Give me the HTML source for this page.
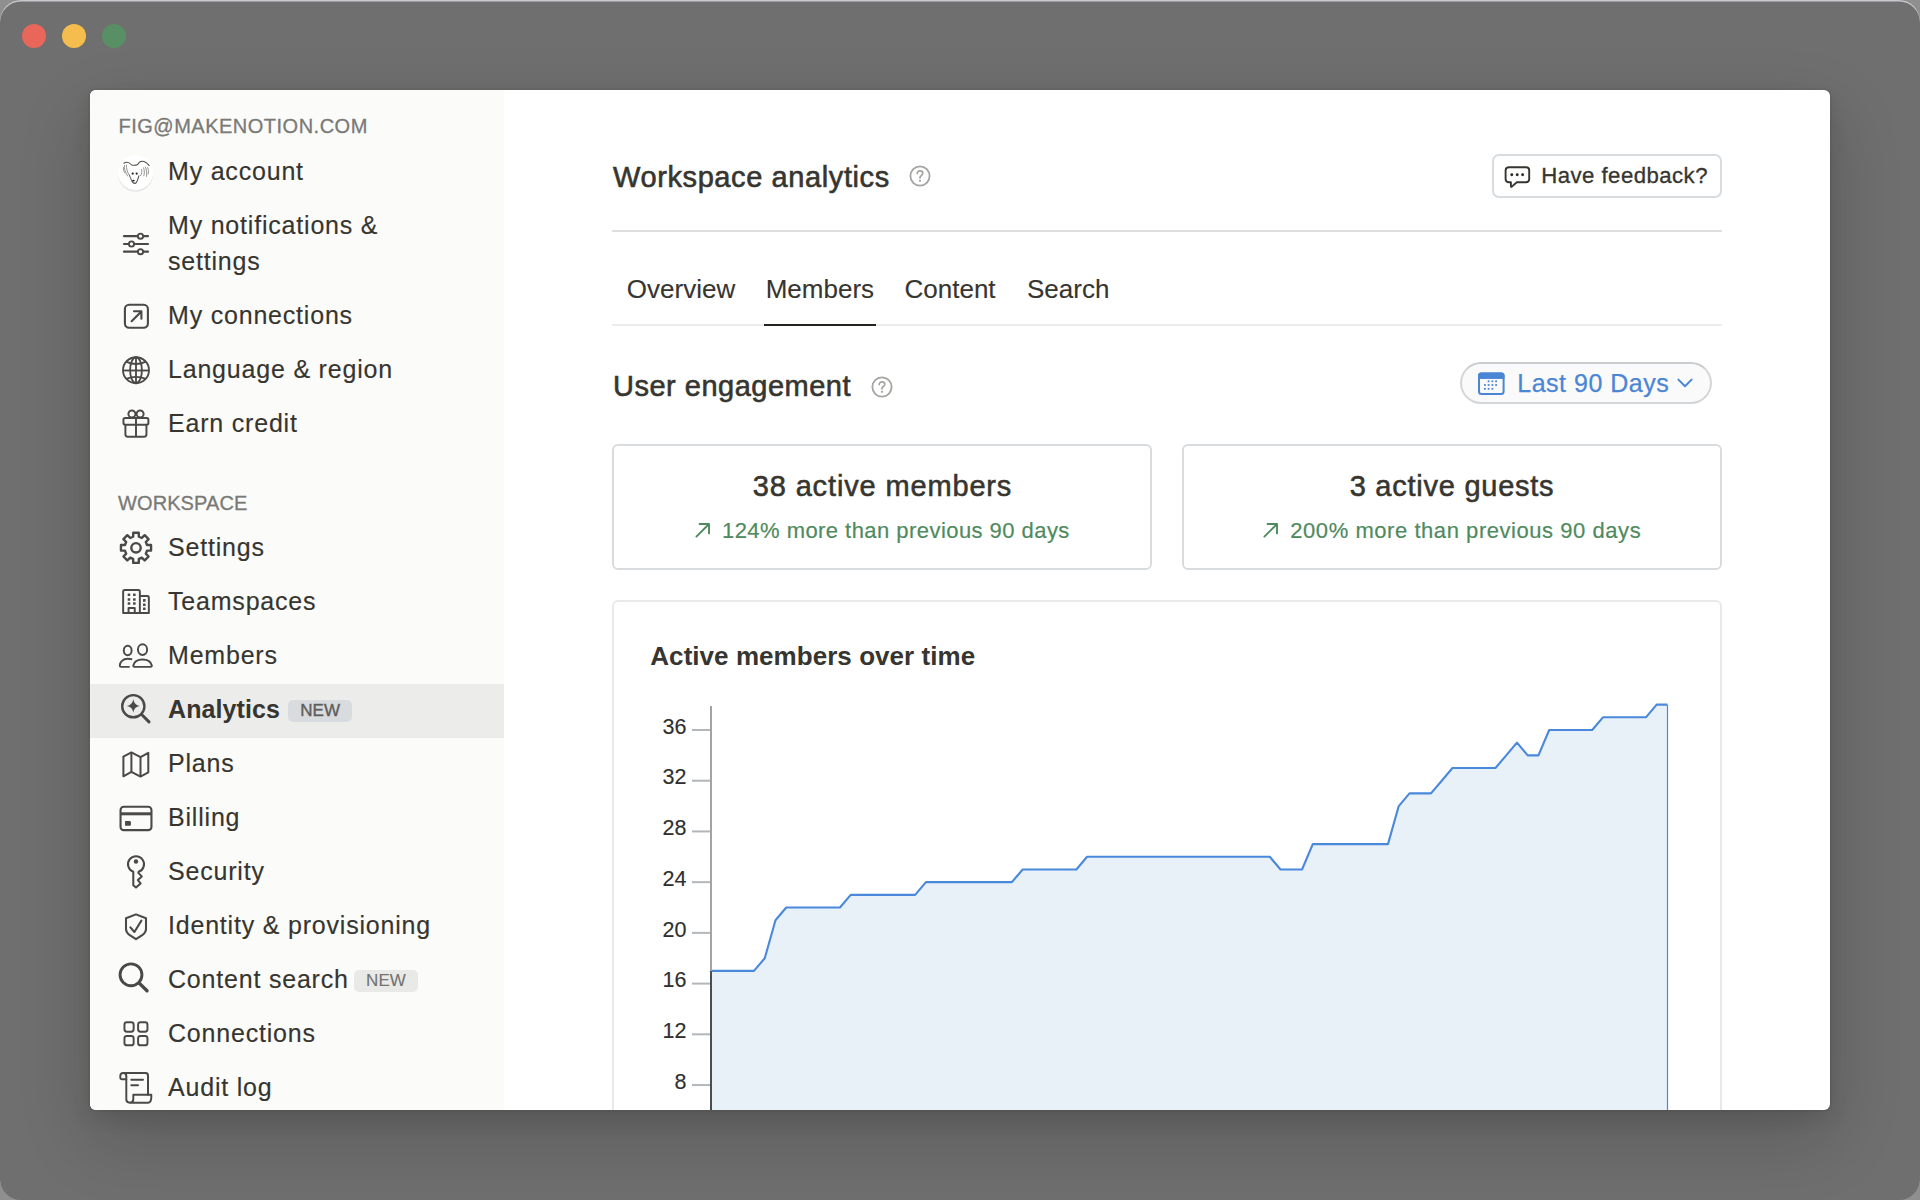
<!DOCTYPE html>
<html><head><meta charset="utf-8"><title>Workspace analytics</title>
<style>
html,body{margin:0;padding:0;width:1920px;height:1200px;overflow:hidden;background:#8f8f8f;font-family:"Liberation Sans", sans-serif;}
.win{position:absolute;left:0;top:0;width:1920px;height:1200px;background:#6f6f6f;border-radius:21px;overflow:hidden;box-shadow:inset 0 1.5px 0 #c7c9cc;}
.dot{position:absolute;top:24px;width:24px;height:24px;border-radius:50%;}
.panel{position:absolute;left:90px;top:90px;width:1740px;height:1020px;background:#fff;border-radius:6px;overflow:hidden;
box-shadow:0 0 0 1.8px rgba(15,15,15,0.05),0 9px 18px rgba(15,15,15,0.1),0 27px 71px rgba(15,15,15,0.2);}
.side{position:absolute;left:0;top:0;width:414px;height:1020px;background:#fbfbfa;}
.hl{position:absolute;left:0;top:594px;width:414px;height:54px;background:#ececeb;}
.layer{position:absolute;left:-90px;top:-90px;width:1920px;height:1200px;}
.t{position:absolute;white-space:nowrap;}
.ic{position:absolute;overflow:visible;}
.box{position:absolute;box-sizing:border-box;}
.badge{position:absolute;border-radius:5px;}
</style></head>
<body>
<div class="win">
<div class="dot" style="left:22px;background:#e8665a"></div>
<div class="dot" style="left:62px;background:#f4bd4e"></div>
<div class="dot" style="left:102px;background:#598f64"></div>
<div class="panel">
<div class="side"></div>
<div class="hl"></div>
<div class="layer">
<svg class="ic" style="left:118px;top:225px" width="36" height="36" viewBox="0 0 36 36"><g stroke="#4a4945" stroke-width="2.2" stroke-linecap="round" fill="none">
<line x1="6" y1="11.2" x2="30" y2="11.2"/><line x1="6" y1="19" x2="30" y2="19"/><line x1="6" y1="26.7" x2="30" y2="26.7"/></g>
<g stroke="#4a4945" stroke-width="1.9" fill="#fbfbfa"><circle cx="22.5" cy="11.2" r="2.6"/><circle cx="13.5" cy="19" r="2.6"/><circle cx="22.5" cy="26.7" r="2.6"/></g></svg>
<svg class="ic" style="left:118px;top:298px" width="36" height="36" viewBox="0 0 36 36"><g stroke="#4a4945" stroke-width="2.1" fill="none" stroke-linecap="round" stroke-linejoin="round">
<rect x="6.9" y="6.8" width="23" height="23" rx="4.2"/><path d="M13.6 23.2 L23.4 13.4 M16 13.3 H23.4 V20.8"/></g></svg>
<svg class="ic" style="left:118px;top:352px" width="36" height="36" viewBox="0 0 36 36"><g stroke="#4a4945" stroke-width="1.85" fill="none">
<circle cx="18" cy="18.2" r="13"/><ellipse cx="18" cy="18.2" rx="5.9" ry="13"/><line x1="18" y1="5.2" x2="18" y2="31.2"/>
<line x1="5" y1="18.5" x2="31" y2="18.5"/><path d="M8.2 9.6 Q18 14.4 27.8 9.6"/><path d="M8.2 26.8 Q18 22.9 27.8 26.8"/></g></svg>
<svg class="ic" style="left:118px;top:405px" width="36" height="36" viewBox="0 0 36 36"><g stroke="#4a4945" stroke-width="1.95" fill="none" stroke-linejoin="round">
<circle cx="13.9" cy="8.9" r="3.5"/><circle cx="22.1" cy="8.9" r="3.5"/>
<rect x="5.45" y="12.95" width="24.95" height="6.8" rx="1.8" fill="#fbfbfa"/><path d="M7.4 19.75 V29.2 A2.5 2.5 0 0 0 9.9 31.7 H25.95 A2.5 2.5 0 0 0 28.45 29.2 V19.75"/>
<line x1="18" y1="12.4" x2="18" y2="31.7"/></g></svg>
<svg class="ic" style="left:118px;top:530px" width="36" height="36" viewBox="0 0 36 36"><g stroke="#4a4945" stroke-width="2.4" fill="none" stroke-linejoin="round">
<path d="M29.04 14.96 L33.05 15.05 L33.05 20.55 L29.04 20.64 L27.81 23.60 L30.59 26.50 L26.70 30.39 L23.80 27.61 L20.84 28.84 L20.75 32.85 L15.25 32.85 L15.16 28.84 L12.20 27.61 L9.30 30.39 L5.41 26.50 L8.19 23.60 L6.96 20.64 L2.95 20.55 L2.95 15.05 L6.96 14.96 L8.19 12.00 L5.41 9.10 L9.30 5.21 L12.20 7.99 L15.16 6.76 L15.25 2.75 L20.75 2.75 L20.84 6.76 L23.80 7.99 L26.70 5.21 L30.59 9.10 L27.81 12.00 Z"/><circle cx="18" cy="17.8" r="4.7"/></g></svg>
<svg class="ic" style="left:118px;top:584px" width="36" height="36" viewBox="0 0 36 36"><g stroke="#4a4945" stroke-width="1.95" fill="none" stroke-linejoin="round">
<path d="M6.6 29.05 H5.15 V7.5 A1.45 1.45 0 0 1 6.6 6.05 H20.4 A1.45 1.45 0 0 1 21.85 7.5 V29.05 Z"/>
<path d="M21.85 12.05 H29.4 A1.45 1.45 0 0 1 30.85 13.5 V29.05 H21.85"/><path d="M10.55 29.05 V24.05 H16.75 V29.05"/></g>
<g fill="#4a4945"><rect x="9.65" y="9.5" width="2.6" height="2.6" rx="0.5"/><rect x="15.05" y="9.5" width="2.6" height="2.6" rx="0.5"/>
<rect x="9.65" y="14.15" width="2.6" height="2.6" rx="0.5"/><rect x="15.05" y="14.15" width="2.6" height="2.6" rx="0.5"/>
<rect x="9.65" y="18.2" width="2.6" height="2.6" rx="0.5"/><rect x="15.05" y="18.2" width="2.6" height="2.6" rx="0.5"/>
<rect x="25" y="15.05" width="2.6" height="2.6" rx="0.5"/><rect x="25" y="19.4" width="2.6" height="2.6" rx="0.5"/><rect x="25" y="23.45" width="2.6" height="2.6" rx="0.5"/></g></svg>
<svg class="ic" style="left:116px;top:637px" width="40" height="36" viewBox="0 0 40 36"><g stroke="#4a4945" stroke-width="1.95" fill="none" stroke-linecap="butt" stroke-linejoin="round">
<ellipse cx="11.7" cy="13.5" rx="3.9" ry="4.7"/><ellipse cx="26.55" cy="12.6" rx="4.6" ry="5.35"/>
<path d="M16.2 22.4 C14.8 21.9 13.4 21.65 11.7 21.65 C6.8 21.65 3.8 25.2 3.8 28.6 C3.8 29.4 4.3 29.85 5 29.85 H13.7"/>
<path d="M18.4 29.85 C17.6 29.85 17.15 29.3 17.3 28.5 C18.2 24.6 22 22.55 26.55 22.55 C31.1 22.55 34.9 24.6 35.8 28.5 C35.95 29.3 35.5 29.85 34.7 29.85 Z"/></g></svg>
<svg class="ic" style="left:118px;top:690px" width="36" height="36" viewBox="0 0 36 36"><g stroke="#4a4945" fill="none" stroke-linecap="round">
<circle cx="15.3" cy="16.2" r="11.1" stroke-width="2.4"/><line x1="23.6" y1="24.5" x2="31" y2="31.9" stroke-width="3"/></g>
<path fill="#4a4945" d="M15.3 9.2 Q16.2 15 21.7 15.9 Q16.2 16.8 15.3 22.6 Q14.4 16.8 8.9 15.9 Q14.4 15 15.3 9.2 Z"/></svg>
<svg class="ic" style="left:118px;top:747px" width="36" height="36" viewBox="0 0 36 36"><g stroke="#4a4945" stroke-width="2" fill="none" stroke-linejoin="round">
<path d="M5.4 9.6 L13.4 5.4 L22.5 10.2 L30.3 5.8 V25.4 L22.5 29.6 L13.4 24.9 L5.4 29.3 Z"/><line x1="13.4" y1="5.4" x2="13.4" y2="24.9"/><line x1="22.5" y1="10.2" x2="22.5" y2="29.6"/></g></svg>
<svg class="ic" style="left:118px;top:800px" width="36" height="36" viewBox="0 0 36 36"><g stroke="#4a4945" stroke-width="2.1" fill="none">
<rect x="2.55" y="6.75" width="30.9" height="23.4" rx="3.2"/><line x1="2.55" y1="13.8" x2="33.45" y2="13.8" stroke-width="3"/></g>
<path d="M7.05 21 H11.6 A1.3 1.3 0 0 1 12.9 22.3 V24.5 A1.3 1.3 0 0 1 11.6 25.8 H7.05 Z" fill="#4a4945"/></svg>
<svg class="ic" style="left:118px;top:854px" width="36" height="36" viewBox="0 0 36 36"><g stroke="#4a4945" stroke-width="2.05" fill="none" stroke-linejoin="round">
<path d="M15.3 17.73 A8 8 0 1 1 20.6 17.77 L20.3 18.9 L23.8 22.4 L19.9 26.1 L22.6 29.4 L18 33.6 L15.3 31.2 Z"/></g>
<circle cx="18" cy="7.5" r="2.2" fill="#4a4945"/></svg>
<svg class="ic" style="left:118px;top:908px" width="36" height="36" viewBox="0 0 36 36"><g stroke="#4a4945" stroke-width="2.05" fill="none" stroke-linejoin="round" stroke-linecap="round">
<path d="M18 6.4 L28 10.2 V21 Q28 24.4 24.6 26.8 L18 31.2 L11.4 26.8 Q8 24.4 8 21 V10.2 Z"/><path d="M12.4 19.3 L16.4 24 L23.4 12.6"/></g></svg>
<svg class="ic" style="left:114px;top:958px" width="40" height="40" viewBox="0 0 40 40"><g stroke="#4a4945" fill="none" stroke-linecap="round">
<circle cx="17" cy="16.8" r="10.95" stroke-width="2.9"/><line x1="25.2" y1="25.1" x2="33" y2="32.8" stroke-width="3.4"/></g></svg>
<svg class="ic" style="left:116px;top:1014px" width="36" height="36" viewBox="0 0 36 36"><g stroke="#4a4945" stroke-width="1.95" fill="none">
<rect x="8.45" y="8.3" width="9.2" height="9.35" rx="2.4"/><rect x="22.1" y="8.3" width="9.35" height="9.35" rx="2.4"/>
<rect x="8.45" y="21.95" width="9.2" height="9.35" rx="2.4"/><rect x="22.1" y="21.95" width="9.35" height="9.35" rx="2.4"/></g></svg>
<svg class="ic" style="left:116px;top:1068px" width="40" height="40" viewBox="0 0 40 40"><g stroke="#4a4945" stroke-width="1.95" fill="none" stroke-linejoin="round" stroke-linecap="round">
<path d="M7.2 5 H29.5 C31 5 32 6 32 7.5 V26.7"/>
<path d="M10.3 8 V31.3 C10.3 33.2 11.8 34.7 13.8 34.7 H32 C34 34.7 35.3 33 35.3 29 V26.7 H17.3 V31.3 C17.3 33.2 15.8 34.7 13.8 34.7"/>
<path d="M10.3 11.3 H5.6 C4.7 11.3 4.3 10.7 4.3 9.8 V8 C4.3 6.2 5.5 5 7.2 5 C9 5 10.3 6.2 10.3 8"/>
<line x1="15.3" y1="11.67" x2="27" y2="11.67"/><line x1="15.3" y1="17.17" x2="22" y2="17.17"/></g></svg>
<svg class="ic" style="left:114px;top:152px" width="44" height="44" viewBox="0 0 44 44">
<circle cx="21.6" cy="22.2" r="17.6" fill="#e6e6e5"/><circle cx="21.6" cy="20.6" r="17.6" fill="#ffffff"/>
<g stroke="#55534f" stroke-width="1.1" fill="none" stroke-linecap="round">
<path d="M9.9 11.2 C12.5 9.6 15.5 10.6 17.6 13 C19.8 13.4 22 13.2 23.8 12.4 C25 9.6 27.6 8.8 30 9.6 C32 10.4 34 12 35.2 13.6"/>
<path d="M15.4 23 C16.2 25.4 17 27.6 18 29.3" stroke="#777"/><path d="M24.9 23.8 C24 27 23 30.4 21.6 31.2 C20.4 31.6 19 30.8 18.2 29.6"/></g>
<g stroke="#8a8985" stroke-width="0.9" fill="none" stroke-linecap="round">
<path d="M10.4 13.4 C10 16.6 11.2 20 13.6 24"/><path d="M12.4 13.2 C12.4 16.4 13.2 19.6 14.8 22.6"/><path d="M9.4 15.4 C9.2 17.6 9.8 19.4 11 21"/>
<path d="M31.4 15 C32.6 18 33 21 32.6 24.4"/><path d="M29.6 15.8 C30.6 18.6 30.6 21.4 29.8 23.8"/><path d="M33.6 15.6 C34.6 17.6 34.8 19.8 34.2 22"/>
<path d="M27.6 17.4 C28.2 19.4 28 21.6 26.6 23.6"/></g>
<circle cx="18.7" cy="21.6" r="1.1" fill="#222"/><circle cx="22.7" cy="21.6" r="1.1" fill="#222"/><ellipse cx="19.4" cy="28.6" rx="1.3" ry="0.9" fill="#222"/>
</svg>
<div class="t" style="left:118.5px;top:114.37px;font-size:20px;line-height:25.0px;color:#7a7975;font-weight:400;letter-spacing:0.5px;-webkit-text-stroke:0.3px #7a7975;">FIG@MAKENOTION.COM</div>
<div class="t" style="left:118px;top:490.57px;font-size:20px;line-height:25.0px;color:#7a7975;font-weight:400;letter-spacing:0.1px;-webkit-text-stroke:0.3px #7a7975;">WORKSPACE</div>
<div class="t" style="left:168px;top:155.71px;font-size:25px;line-height:31.25px;color:#37352f;font-weight:400;letter-spacing:0.8px;-webkit-text-stroke:0.15px #37352f;">My account</div>
<div class="t" style="left:168px;top:209.71px;font-size:25px;line-height:31.25px;color:#37352f;font-weight:400;letter-spacing:0.8px;-webkit-text-stroke:0.15px #37352f;">My notifications &amp;</div>
<div class="t" style="left:168px;top:245.71px;font-size:25px;line-height:31.25px;color:#37352f;font-weight:400;letter-spacing:0.8px;-webkit-text-stroke:0.15px #37352f;">settings</div>
<div class="t" style="left:168px;top:299.71px;font-size:25px;line-height:31.25px;color:#37352f;font-weight:400;letter-spacing:0.8px;-webkit-text-stroke:0.15px #37352f;">My connections</div>
<div class="t" style="left:168px;top:353.71px;font-size:25px;line-height:31.25px;color:#37352f;font-weight:400;letter-spacing:0.8px;-webkit-text-stroke:0.15px #37352f;">Language &amp; region</div>
<div class="t" style="left:168px;top:407.71px;font-size:25px;line-height:31.25px;color:#37352f;font-weight:400;letter-spacing:0.8px;-webkit-text-stroke:0.15px #37352f;">Earn credit</div>
<div class="t" style="left:168px;top:531.71px;font-size:25px;line-height:31.25px;color:#37352f;font-weight:400;letter-spacing:0.8px;-webkit-text-stroke:0.15px #37352f;">Settings</div>
<div class="t" style="left:168px;top:585.71px;font-size:25px;line-height:31.25px;color:#37352f;font-weight:400;letter-spacing:0.8px;-webkit-text-stroke:0.15px #37352f;">Teamspaces</div>
<div class="t" style="left:168px;top:639.71px;font-size:25px;line-height:31.25px;color:#37352f;font-weight:400;letter-spacing:0.8px;-webkit-text-stroke:0.15px #37352f;">Members</div>
<div class="t" style="left:168px;top:747.71px;font-size:25px;line-height:31.25px;color:#37352f;font-weight:400;letter-spacing:0.8px;-webkit-text-stroke:0.15px #37352f;">Plans</div>
<div class="t" style="left:168px;top:801.71px;font-size:25px;line-height:31.25px;color:#37352f;font-weight:400;letter-spacing:0.8px;-webkit-text-stroke:0.15px #37352f;">Billing</div>
<div class="t" style="left:168px;top:855.71px;font-size:25px;line-height:31.25px;color:#37352f;font-weight:400;letter-spacing:0.8px;-webkit-text-stroke:0.15px #37352f;">Security</div>
<div class="t" style="left:168px;top:909.71px;font-size:25px;line-height:31.25px;color:#37352f;font-weight:400;letter-spacing:0.8px;-webkit-text-stroke:0.15px #37352f;">Identity &amp; provisioning</div>
<div class="t" style="left:168px;top:963.71px;font-size:25px;line-height:31.25px;color:#37352f;font-weight:400;letter-spacing:0.8px;-webkit-text-stroke:0.15px #37352f;">Content search</div>
<div class="t" style="left:168px;top:1017.71px;font-size:25px;line-height:31.25px;color:#37352f;font-weight:400;letter-spacing:0.8px;-webkit-text-stroke:0.15px #37352f;">Connections</div>
<div class="t" style="left:168px;top:1071.71px;font-size:25px;line-height:31.25px;color:#37352f;font-weight:400;letter-spacing:0.8px;-webkit-text-stroke:0.15px #37352f;">Audit log</div>
<div class="t" style="left:168px;top:693.71px;font-size:25px;line-height:31.25px;color:#37352f;font-weight:700;letter-spacing:0.1px;">Analytics</div>
<div class="badge" style="left:288px;top:700px;width:64px;height:22px;background:#d9dcdf"></div>
<div class="t" style="left:300.2px;top:699.98px;font-size:17px;line-height:21.25px;color:#5f5e5a;font-weight:400;letter-spacing:0.1px;-webkit-text-stroke:0.4px #5f5e5a;">NEW</div>
<div class="badge" style="left:354px;top:970px;width:64px;height:22px;background:#e9e9e8"></div>
<div class="t" style="left:366px;top:969.98px;font-size:17px;line-height:21.25px;color:#73726e;font-weight:400;letter-spacing:0.1px;-webkit-text-stroke:0.1px #73726e;">NEW</div>
<div class="t" style="left:613px;top:159.43px;font-size:29px;line-height:36.25px;color:#37352f;font-weight:400;letter-spacing:0.6px;-webkit-text-stroke:0.6px #37352f;">Workspace analytics</div>
<svg class="ic" style="left:908px;top:164px" width="24" height="24" viewBox="0 0 24 24"><circle cx="12" cy="12" r="9.6" stroke="#a5a5a2" stroke-width="1.85" fill="none"/><path d="M9.2 9.6 C9.2 7.9 10.4 6.9 12 6.9 C13.6 6.9 14.8 7.9 14.8 9.3 C14.8 10.8 13.6 11.3 12.8 12 C12.2 12.5 12 13 12 13.9" stroke="#a5a5a2" stroke-width="1.7" fill="none" stroke-linecap="round"/><circle cx="12" cy="16.8" r="1.15" fill="#a5a5a2"/></svg>
<div class="box" style="left:612px;top:230px;width:1110px;height:2px;background:#dcdee0"></div>
<div class="box" style="left:1492px;top:154px;width:230px;height:44px;border:2px solid #d9dcdf;border-radius:7px;background:#fff"></div>
<svg class="ic" style="left:1502px;top:163px" width="30" height="28" viewBox="0 0 30 28">
<path d="M7 4.2 H24 C26 4.2 27.2 5.4 27.2 7.4 V16 C27.2 18 26 19.2 24 19.2 H14.8 L9.8 23.6 C9.4 24 8.9 23.8 8.9 23.2 V19.2 H7 C5 19.2 3.6 18 3.6 16 V7.4 C3.6 5.4 5 4.2 7 4.2 Z" stroke="#37352f" stroke-width="1.9" fill="none" stroke-linejoin="round"/>
<circle cx="9.8" cy="11.8" r="1.45" fill="#2a2925"/><circle cx="15.2" cy="11.8" r="1.45" fill="#2a2925"/><circle cx="20.6" cy="11.8" r="1.45" fill="#2a2925"/></svg>
<div class="t" style="left:1541.3px;top:162.43px;font-size:22.2px;line-height:27.75px;color:#37352f;font-weight:400;letter-spacing:0.45px;-webkit-text-stroke:0.3px #37352f;">Have feedback?</div>
<div class="t" style="left:626.8px;top:273.24px;font-size:26px;line-height:32.5px;color:#37352f;font-weight:400;letter-spacing:0px;-webkit-text-stroke:0.12px #37352f;">Overview</div>
<div class="t" style="left:765.7px;top:273.24px;font-size:26px;line-height:32.5px;color:#37352f;font-weight:400;letter-spacing:0px;-webkit-text-stroke:0.12px #37352f;">Members</div>
<div class="t" style="left:904.5px;top:273.24px;font-size:26px;line-height:32.5px;color:#37352f;font-weight:400;letter-spacing:0px;-webkit-text-stroke:0.12px #37352f;">Content</div>
<div class="t" style="left:1027px;top:273.24px;font-size:26px;line-height:32.5px;color:#37352f;font-weight:400;letter-spacing:0px;-webkit-text-stroke:0.12px #37352f;">Search</div>
<div class="box" style="left:612px;top:324px;width:1110px;height:2px;background:#ebebea"></div>
<div class="box" style="left:764px;top:324px;width:112px;height:2px;background:#24231f"></div>
<div class="t" style="left:613px;top:367.83px;font-size:29px;line-height:36.25px;color:#37352f;font-weight:400;letter-spacing:0.5px;-webkit-text-stroke:0.6px #37352f;">User engagement</div>
<svg class="ic" style="left:869.75px;top:375px" width="24" height="24" viewBox="0 0 24 24"><circle cx="12" cy="12" r="9.6" stroke="#a5a5a2" stroke-width="1.85" fill="none"/><path d="M9.2 9.6 C9.2 7.9 10.4 6.9 12 6.9 C13.6 6.9 14.8 7.9 14.8 9.3 C14.8 10.8 13.6 11.3 12.8 12 C12.2 12.5 12 13 12 13.9" stroke="#a5a5a2" stroke-width="1.7" fill="none" stroke-linecap="round"/><circle cx="12" cy="16.8" r="1.15" fill="#a5a5a2"/></svg>
<div class="box" style="left:1460px;top:362px;width:252px;height:42px;border:2px solid #d3d6d9;border-top-color:#c9cdd0;border-radius:22px;background:#fafafa"></div>
<svg class="ic" style="left:1476px;top:370px" width="30" height="27" viewBox="0 0 30 27">
<rect x="3" y="3.5" width="24.6" height="20.6" rx="2.6" fill="none" stroke="#4a85d6" stroke-width="2"/>
<rect x="2.2" y="2.6" width="26.2" height="6.2" rx="2.6" fill="#4a85d6"/><rect x="2.2" y="5.5" width="26.2" height="3.3" fill="#4a85d6"/>
<g fill="#4a85d6"><rect x="11.7" y="10.4" width="1.8" height="1.8"/><rect x="15.5" y="10.4" width="1.8" height="1.8"/><rect x="19.2" y="10.4" width="1.8" height="1.8"/>
<rect x="8" y="14.1" width="1.8" height="1.8"/><rect x="11.7" y="14.1" width="1.8" height="1.8"/><rect x="15.5" y="14.1" width="1.8" height="1.8"/><rect x="19.2" y="14.1" width="1.8" height="1.8"/>
<rect x="8" y="17.9" width="1.8" height="1.8"/><rect x="11.7" y="17.9" width="1.8" height="1.8"/><rect x="15.5" y="17.9" width="1.8" height="1.8"/></g></svg>
<div class="t" style="left:1517.3px;top:368.31px;font-size:25px;line-height:31.25px;color:#4a85d6;font-weight:400;letter-spacing:0.5px;-webkit-text-stroke:0.25px #4a85d6;">Last 90 Days</div>
<svg class="ic" style="left:1674px;top:375px" width="22" height="16" viewBox="0 0 22 16"><path d="M4.4 4.6 L11 11.2 L17.6 4.6" stroke="#4a85d6" stroke-width="2" fill="none" stroke-linecap="round" stroke-linejoin="round"/></svg>
<div class="box" style="left:612px;top:444px;width:540px;height:126px;border:2px solid #d9dcdf;border-radius:6px"></div>
<div class="box" style="left:1182px;top:444px;width:540px;height:126px;border:2px solid #d9dcdf;border-radius:6px"></div>
<div class="t" style="left:382.5px;width:1000px;text-align:center;top:468.23px;font-size:29px;line-height:36.25px;color:#37352f;font-weight:400;letter-spacing:0.85px;-webkit-text-stroke:0.55px #37352f;">38 active members</div>
<svg class="ic" style="left:693px;top:520px" width="20" height="20" viewBox="0 0 20 20"><path d="M3.4 16.6 L16 4 M6.6 4 H16 V13.4" stroke="#4f8a5e" stroke-width="1.9" fill="none" stroke-linecap="round" stroke-linejoin="round"/></svg>
<div class="t" style="left:722px;top:517.03px;font-size:22px;line-height:27.5px;color:#4f8a5e;font-weight:400;letter-spacing:0.45px;-webkit-text-stroke:0.2px #4f8a5e;">124% more than previous 90 days</div>
<div class="t" style="left:952px;width:1000px;text-align:center;top:468.23px;font-size:29px;line-height:36.25px;color:#37352f;font-weight:400;letter-spacing:0.75px;-webkit-text-stroke:0.55px #37352f;">3 active guests</div>
<svg class="ic" style="left:1261px;top:520px" width="20" height="20" viewBox="0 0 20 20"><path d="M3.4 16.6 L16 4 M6.6 4 H16 V13.4" stroke="#4f8a5e" stroke-width="1.9" fill="none" stroke-linecap="round" stroke-linejoin="round"/></svg>
<div class="t" style="left:1290.3px;top:517.03px;font-size:22px;line-height:27.5px;color:#4f8a5e;font-weight:400;letter-spacing:0.55px;-webkit-text-stroke:0.2px #4f8a5e;">200% more than previous 90 days</div>
<div class="box" style="left:612px;top:600px;width:1110px;height:600px;border:2px solid #e9e9e7;border-radius:6px"></div>
<div class="t" style="left:650.3px;top:639.64px;font-size:26px;line-height:32.5px;color:#37352f;font-weight:700;letter-spacing:0.05px;">Active members over time</div>
<svg class="ic" style="left:0;top:0" width="1920" height="1200" viewBox="0 0 1920 1200"><polygon points="711,1200 711.00,970.92 721.75,970.92 732.49,970.92 743.24,970.92 753.98,970.92 764.73,958.24 775.48,920.20 786.22,907.52 796.97,907.52 807.71,907.52 818.46,907.52 829.21,907.52 839.95,907.52 850.70,894.84 861.44,894.84 872.19,894.84 882.94,894.84 893.68,894.84 904.43,894.84 915.17,894.84 925.92,882.16 936.67,882.16 947.41,882.16 958.16,882.16 968.90,882.16 979.65,882.16 990.40,882.16 1001.14,882.16 1011.89,882.16 1022.63,869.48 1033.38,869.48 1044.13,869.48 1054.87,869.48 1065.62,869.48 1076.36,869.48 1087.11,856.80 1097.86,856.80 1108.60,856.80 1119.35,856.80 1130.09,856.80 1140.84,856.80 1151.59,856.80 1162.33,856.80 1173.08,856.80 1183.82,856.80 1194.57,856.80 1205.32,856.80 1216.06,856.80 1226.81,856.80 1237.55,856.80 1248.30,856.80 1259.05,856.80 1269.79,856.80 1280.54,869.48 1291.28,869.48 1302.03,869.48 1312.78,844.12 1323.52,844.12 1334.27,844.12 1345.01,844.12 1355.76,844.12 1366.51,844.12 1377.25,844.12 1388.00,844.12 1398.74,806.08 1409.49,793.40 1420.24,793.40 1430.98,793.40 1441.73,780.72 1452.47,768.04 1463.22,768.04 1473.97,768.04 1484.71,768.04 1495.46,768.04 1506.20,755.36 1516.95,742.68 1527.70,755.36 1538.44,755.36 1549.19,730.00 1559.93,730.00 1570.68,730.00 1581.43,730.00 1592.17,730.00 1602.92,717.32 1613.66,717.32 1624.41,717.32 1635.16,717.32 1645.90,717.32 1656.65,704.64 1667.39,704.64 1667.39,1200" fill="#e8f0f8"/><polyline points="711.00,970.92 721.75,970.92 732.49,970.92 743.24,970.92 753.98,970.92 764.73,958.24 775.48,920.20 786.22,907.52 796.97,907.52 807.71,907.52 818.46,907.52 829.21,907.52 839.95,907.52 850.70,894.84 861.44,894.84 872.19,894.84 882.94,894.84 893.68,894.84 904.43,894.84 915.17,894.84 925.92,882.16 936.67,882.16 947.41,882.16 958.16,882.16 968.90,882.16 979.65,882.16 990.40,882.16 1001.14,882.16 1011.89,882.16 1022.63,869.48 1033.38,869.48 1044.13,869.48 1054.87,869.48 1065.62,869.48 1076.36,869.48 1087.11,856.80 1097.86,856.80 1108.60,856.80 1119.35,856.80 1130.09,856.80 1140.84,856.80 1151.59,856.80 1162.33,856.80 1173.08,856.80 1183.82,856.80 1194.57,856.80 1205.32,856.80 1216.06,856.80 1226.81,856.80 1237.55,856.80 1248.30,856.80 1259.05,856.80 1269.79,856.80 1280.54,869.48 1291.28,869.48 1302.03,869.48 1312.78,844.12 1323.52,844.12 1334.27,844.12 1345.01,844.12 1355.76,844.12 1366.51,844.12 1377.25,844.12 1388.00,844.12 1398.74,806.08 1409.49,793.40 1420.24,793.40 1430.98,793.40 1441.73,780.72 1452.47,768.04 1463.22,768.04 1473.97,768.04 1484.71,768.04 1495.46,768.04 1506.20,755.36 1516.95,742.68 1527.70,755.36 1538.44,755.36 1549.19,730.00 1559.93,730.00 1570.68,730.00 1581.43,730.00 1592.17,730.00 1602.92,717.32 1613.66,717.32 1624.41,717.32 1635.16,717.32 1645.90,717.32 1656.65,704.64 1667.39,704.64" fill="none" stroke="#4a88dc" stroke-width="2.1" stroke-linejoin="round"/><line x1="1667.5" y1="704.64" x2="1667.5" y2="1200" stroke="#4a88dc" stroke-width="1.2"/><line x1="711" y1="706" x2="711" y2="971" stroke="#a3a4a1" stroke-width="2"/><line x1="711" y1="971" x2="711" y2="1200" stroke="#4d4d4d" stroke-width="2"/><line x1="692" y1="730.00" x2="710" y2="730.00" stroke="#b3b7bb" stroke-width="2"/><line x1="692" y1="780.72" x2="710" y2="780.72" stroke="#b3b7bb" stroke-width="2"/><line x1="692" y1="831.44" x2="710" y2="831.44" stroke="#b3b7bb" stroke-width="2"/><line x1="692" y1="882.16" x2="710" y2="882.16" stroke="#b3b7bb" stroke-width="2"/><line x1="692" y1="932.88" x2="710" y2="932.88" stroke="#b3b7bb" stroke-width="2"/><line x1="692" y1="983.60" x2="710" y2="983.60" stroke="#b3b7bb" stroke-width="2"/><line x1="692" y1="1034.32" x2="710" y2="1034.32" stroke="#b3b7bb" stroke-width="2"/><line x1="692" y1="1085.04" x2="710" y2="1085.04" stroke="#b3b7bb" stroke-width="2"/><line x1="692" y1="1135.76" x2="710" y2="1135.76" stroke="#b3b7bb" stroke-width="2"/></svg>
<div class="t" style="left:386.5px;width:300px;text-align:right;top:713.71px;font-size:21.5px;line-height:26.88px;color:#2f2f2f;font-weight:400;letter-spacing:0px;-webkit-text-stroke:0.15px #2f2f2f;">36</div>
<div class="t" style="left:386.5px;width:300px;text-align:right;top:764.43px;font-size:21.5px;line-height:26.88px;color:#2f2f2f;font-weight:400;letter-spacing:0px;-webkit-text-stroke:0.15px #2f2f2f;">32</div>
<div class="t" style="left:386.5px;width:300px;text-align:right;top:815.15px;font-size:21.5px;line-height:26.88px;color:#2f2f2f;font-weight:400;letter-spacing:0px;-webkit-text-stroke:0.15px #2f2f2f;">28</div>
<div class="t" style="left:386.5px;width:300px;text-align:right;top:865.87px;font-size:21.5px;line-height:26.88px;color:#2f2f2f;font-weight:400;letter-spacing:0px;-webkit-text-stroke:0.15px #2f2f2f;">24</div>
<div class="t" style="left:386.5px;width:300px;text-align:right;top:916.59px;font-size:21.5px;line-height:26.88px;color:#2f2f2f;font-weight:400;letter-spacing:0px;-webkit-text-stroke:0.15px #2f2f2f;">20</div>
<div class="t" style="left:386.5px;width:300px;text-align:right;top:967.31px;font-size:21.5px;line-height:26.88px;color:#2f2f2f;font-weight:400;letter-spacing:0px;-webkit-text-stroke:0.15px #2f2f2f;">16</div>
<div class="t" style="left:386.5px;width:300px;text-align:right;top:1018.03px;font-size:21.5px;line-height:26.88px;color:#2f2f2f;font-weight:400;letter-spacing:0px;-webkit-text-stroke:0.15px #2f2f2f;">12</div>
<div class="t" style="left:386.5px;width:300px;text-align:right;top:1068.75px;font-size:21.5px;line-height:26.88px;color:#2f2f2f;font-weight:400;letter-spacing:0px;-webkit-text-stroke:0.15px #2f2f2f;">8</div>
<div class="t" style="left:386.5px;width:300px;text-align:right;top:1119.47px;font-size:21.5px;line-height:26.88px;color:#2f2f2f;font-weight:400;letter-spacing:0px;-webkit-text-stroke:0.15px #2f2f2f;">4</div>
</div>
</div>
</div>
</body></html>
